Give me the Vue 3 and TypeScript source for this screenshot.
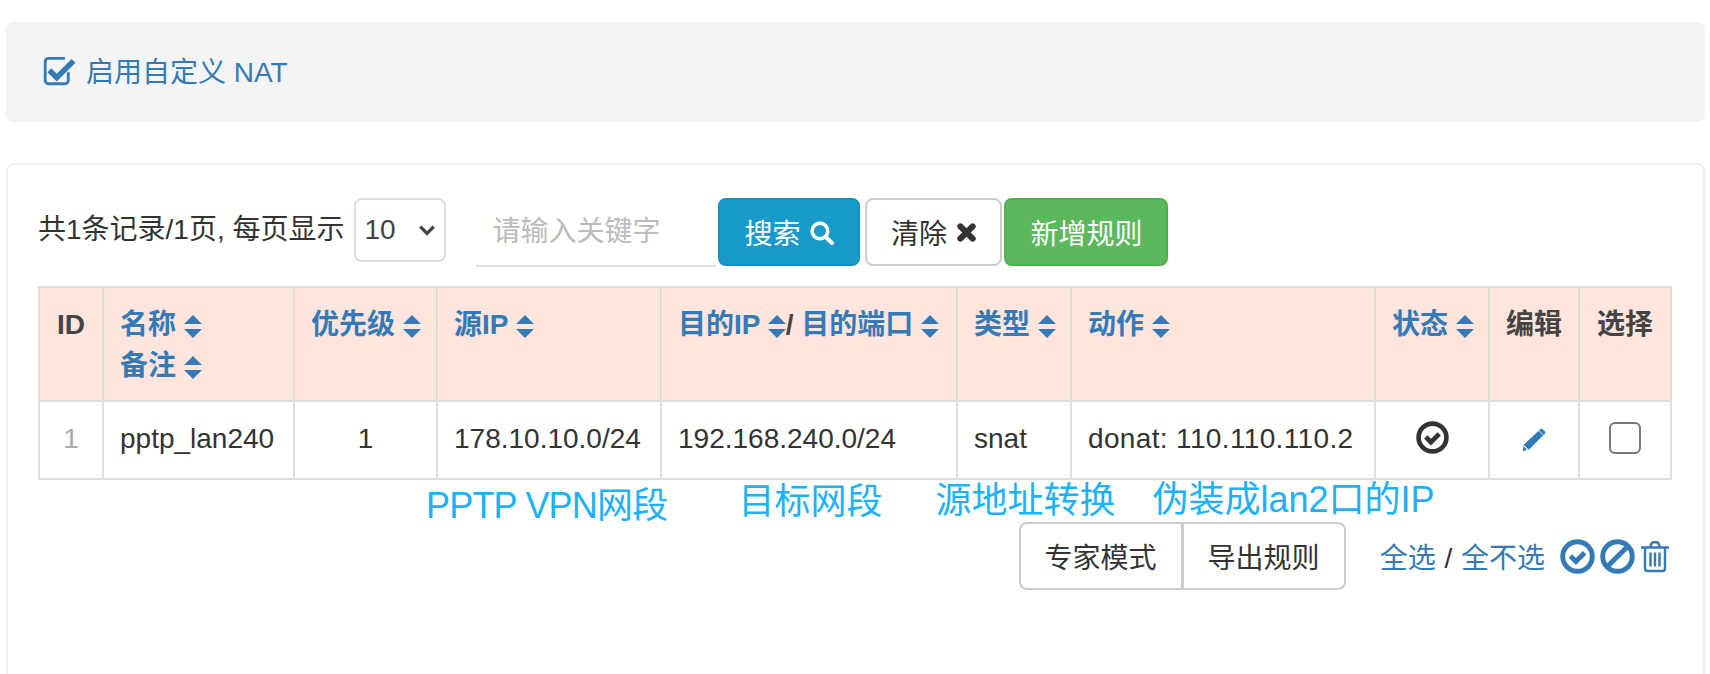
<template>
  <div class="page">
    <!-- NAT switch -->
    <div class="well">
      <label class="nat-check">
        <svg class="check-square" viewBox="0 0 30 30">
          <path d="M23 16.5V24a3 3 0 0 1-3 3H5a3 3 0 0 1-3-3V7a3 3 0 0 1 3-3h15" fill="none" stroke="#337ab7" stroke-width="2.600" />
          <path d="M7.5 13l5 5L26 4.500l3.500 3.500L12.500 25 4 16.500z" fill="#337ab7" />
        </svg>
        <span>启用自定义 NAT</span>
      </label>
    </div>

    <div class="card">
      <!-- Toolbar -->
      <div class="toolbar">
        <span class="summary">共1条记录/1页, 每页显示</span>
        <div class="page-size">
          <span>10</span>
          <svg viewBox="0 0 16 10" class="chevron"><path d="M2 2l6 6 6-6" fill="none" stroke="#444" stroke-width="3" /></svg>
        </div>
        <input class="keyword" type="text" placeholder="请输入关键字" />
        <button class="btn btn-info">
          搜索
          <svg viewBox="0 0 24 24" class="btn-icon"><circle cx="10.500" cy="10.500" r="7.500" fill="none" stroke="#fff" stroke-width="3.400" /><path d="M16 16l6 6" stroke="#fff" stroke-width="4" stroke-linecap="round" /></svg>
        </button>
        <button class="btn btn-default btn-clear">
          清除
          <svg viewBox="0 0 24 24" class="btn-icon close"><path d="M5 5l14 14M19 5L5 19" stroke="#333" stroke-width="7" stroke-linecap="round" /></svg>
        </button>
        <button class="btn btn-success">新增规则</button>
      </div>

      <!-- Rules -->
      <table class="rules">
        <colgroup>
          <col v-for="w in colWidths" :key="w.id" :style="{ width: w.px + 'px' }" />
        </colgroup>
        <thead>
          <tr>
            <th class="plain">ID</th>
            <th>
              <div v-for="label in ['名称', '备注']" :key="label" class="sort-link">
                {{ label }}
                <svg viewBox="1 1 14 18" class="sort"><path d="M8 1l7 7H1zM8 19l-7-7h14z" /></svg>
              </div>
            </th>
            <th><span class="sort-link">优先级 <svg viewBox="1 1 14 18" class="sort"><path d="M8 1l7 7H1zM8 19l-7-7h14z" /></svg></span></th>
            <th><span class="sort-link">源IP <svg viewBox="1 1 14 18" class="sort"><path d="M8 1l7 7H1zM8 19l-7-7h14z" /></svg></span></th>
            <th>
              <span class="sort-link">目的IP <svg viewBox="1 1 14 18" class="sort"><path d="M8 1l7 7H1zM8 19l-7-7h14z" /></svg></span><span class="plain">/</span> <span class="sort-link">目的端口 <svg viewBox="1 1 14 18" class="sort"><path d="M8 1l7 7H1zM8 19l-7-7h14z" /></svg></span>
            </th>
            <th><span class="sort-link">类型 <svg viewBox="1 1 14 18" class="sort"><path d="M8 1l7 7H1zM8 19l-7-7h14z" /></svg></span></th>
            <th><span class="sort-link">动作 <svg viewBox="1 1 14 18" class="sort"><path d="M8 1l7 7H1zM8 19l-7-7h14z" /></svg></span></th>
            <th><span class="sort-link">状态 <svg viewBox="1 1 14 18" class="sort"><path d="M8 1l7 7H1zM8 19l-7-7h14z" /></svg></span></th>
            <th class="plain">编辑</th>
            <th class="plain">选择</th>
          </tr>
        </thead>
        <tbody>
          <tr>
            <td class="row-id">1</td>
            <td>pptp_lan240</td>
            <td class="center">1</td>
            <td>178.10.10.0/24</td>
            <td>192.168.240.0/24</td>
            <td>snat</td>
            <td class="action">donat: 110.110.110.2</td>
            <td class="center">
              <svg viewBox="0 0 32 32" class="cell-icon">
                <circle cx="16" cy="16" r="13.500" fill="none" stroke="#333" stroke-width="4.500" />
                <path d="M9.500 15.500l5 5 8-8" fill="none" stroke="#333" stroke-width="4.500" />
              </svg>
            </td>
            <td class="center">
              <svg viewBox="0 0 28 28" class="cell-icon pencil">
                <path d="M19 4l5 5L9 24l-7 2 1-7z" fill="#337ab7" />
                <path d="M20.500 2.500a2 2 0 0 1 2.800 0l2.200 2.200a2 2 0 0 1 0 2.800l-1 1-5-5z" fill="#337ab7" />
                <path d="M3.500 20.500l4 4" stroke="#fffffd" stroke-width="1.200" />
              </svg>
            </td>
            <td class="center"><span class="row-check"></span></td>
          </tr>
        </tbody>
      </table>

      <!-- Hand-written notes on the screenshot -->
      <div class="notes">
        <span class="note-vpn">PPTP VPN网段</span>
        <span class="note-target">目标网段</span>
        <span class="note-source">源地址转换</span>
        <span class="note-mask">伪装成lan2口的IP</span>
      </div>

      <!-- Footer actions -->
      <div class="actions">
        <div class="btn-group">
          <button class="btn btn-default">专家模式</button>
          <button class="btn btn-default">导出规则</button>
        </div>
        <div class="select-links">
          <a>全选</a> / <a>全不选</a>
        </div>
        <div class="bulk-icons">
          <svg viewBox="0 0 32 32">
            <circle cx="16" cy="16" r="13.500" fill="none" stroke="#337ab7" stroke-width="4.500" />
            <path d="M9.500 15.500l5 5 8-8" fill="none" stroke="#337ab7" stroke-width="4.500" />
          </svg>
          <svg viewBox="0 0 32 32">
            <circle cx="16" cy="16" r="13.500" fill="none" stroke="#337ab7" stroke-width="4.500" />
            <path d="M7 25L25 7" stroke="#337ab7" stroke-width="4.500" />
          </svg>
          <svg viewBox="0 0 30 32" class="trash">
            <path d="M1 7h28M5 7v21a2.500 2.500 0 0 0 2.500 2.500h15A2.500 2.500 0 0 0 25 28V7M10 7l1.500-4a2 2 0 0 1 2-1.300h3a2 2 0 0 1 2 1.300L20 7" fill="none" stroke="#337ab7" stroke-width="2.400" />
            <path d="M10.500 12v14M15 12v14M19.500 12v14" stroke="#337ab7" stroke-width="2.400" />
          </svg>
        </div>
      </div>
    </div>
  </div>
</template>

<script setup lang="ts">
interface ColWidth {
  id: string
  px: number
}

const colWidths: ColWidth[] = [
  { id: 'id', px: 64 },
  { id: 'name', px: 191 },
  { id: 'priority', px: 143 },
  { id: 'src', px: 224 },
  { id: 'dst', px: 296 },
  { id: 'type', px: 114 },
  { id: 'action', px: 304 },
  { id: 'status', px: 114 },
  { id: 'edit', px: 90 },
  { id: 'select', px: 92 }
]
</script>

<style>
html,
body {
  margin: 0;
  background: #fffffd;
  overflow: hidden;
}
</style>

<style scoped>
.page {
  height: 674px;
  overflow: hidden;
  box-sizing: border-box;
  padding: 22px 5px 0 6px;
  font-family: "Liberation Sans", "Noto Sans CJK SC", sans-serif;
  font-size: 28px;
  color: #333;
}

.well {
  height: 100px;
  display: flex;
  align-items: center;
  box-sizing: border-box;
  padding: 0 0 4px 37px;
  background: #f4f4f6;
  border-radius: 8px;
}

.nat-check {
  display: flex;
  align-items: center;
  gap: 10px;
  color: #337ab7;
}

.check-square {
  width: 33px;
  height: 33px;
}

.card {
  margin-top: 41px;
  height: 560px;
  box-sizing: border-box;
  padding: 33px 32px 0 30px;
  border: 2px solid #efefef;
  border-radius: 8px;
  background: #fffffd;
}

.toolbar {
  display: flex;
  align-items: flex-start;
  height: 88px;
}

.summary {
  line-height: 64px;
  margin-right: 10px;
}

.page-size {
  width: 92px;
  height: 64px;
  box-sizing: border-box;
  padding: 0 8px;
  display: flex;
  align-items: center;
  justify-content: space-between;
  border: 2px solid #ddd;
  border-radius: 8px;
  color: #444;
}

.chevron {
  width: 18px;
  height: 12px;
}

.keyword {
  width: 240px;
  height: 69px;
  margin-left: 30px;
  box-sizing: border-box;
  padding: 0 16px;
  border: 0;
  border-bottom: 2px solid #ddd;
  background: transparent;
  font: inherit;
  outline: none;
}

.keyword::placeholder {
  color: #bbb;
}

.btn {
  height: 68px;
  padding: 0 12px;
  box-sizing: border-box;
  display: inline-flex;
  align-items: center;
  justify-content: center;
  gap: 9px;
  font: inherit;
  border: 2px solid transparent;
  border-radius: 8px;
  white-space: nowrap;
}

.btn-info {
  width: 142px;
  margin-left: 2px;
  color: #fff;
  background: #189acb;
  border-color: #1790bd;
}

.btn-default {
  color: #333;
  background: #fffffd;
  border-color: #ccc;
}

.btn-clear {
  width: 137px;
  margin-left: 5px;
}

.btn-success {
  width: 164px;
  margin-left: 2px;
  color: #fff;
  background: #5cb85c;
  border-color: #4cae4c;
}

.btn-icon {
  width: 25px;
  height: 25px;
}

.btn-icon.close {
  width: 21px;
  height: 21px;
}

.rules {
  width: 1632px;
  table-layout: fixed;
  border-collapse: collapse;
  border: 2px solid #ddd;
}

.rules th,
.rules td {
  border: 2px solid #ddd;
  box-sizing: border-box;
  padding: 16px;
  text-align: left;
}

.rules th {
  height: 112px;
  padding: 16px 16px 14px;
  vertical-align: top;
  font-weight: bold;
  line-height: 41px;
  background: #fee5dd;
  color: #444;
  white-space: nowrap;
}

.rules th.plain {
  text-align: center;
  padding: 16px 8px 14px;
}

.rules td {
  height: 78px;
  padding: 0 16px 2px;
  vertical-align: middle;
  white-space: nowrap;
}

.rules td.center {
  text-align: center;
}

.rules td.row-id {
  text-align: center;
  color: #aaa;
  padding: 0 0 2px;
}

.rules td.action {
  letter-spacing: 0.35px;
}

.sort-link {
  color: #337ab7;
}

.plain {
  color: #444;
}

.sort {
  width: 18px;
  height: 23px;
  fill: #337ab7;
  vertical-align: -4px;
}

.cell-icon {
  width: 33px;
  height: 33px;
  margin-bottom: 3px;
  vertical-align: middle;
}

.pencil {
  width: 26px;
  height: 26px;
  margin-bottom: 2px;
}

.row-check {
  display: inline-block;
  width: 32px;
  height: 32px;
  margin-bottom: 2px;
  box-sizing: border-box;
  border: 2px solid #777;
  border-radius: 6px;
  vertical-align: middle;
}

.notes {
  display: flex;
  height: 42px;
  padding-left: 388px;
  font-size: 36px;
  line-height: 46px;
  color: #1cb1fb;
  white-space: nowrap;
}

.note-vpn {
  margin-top: 3px;
  letter-spacing: -0.8px;
}

.note-target {
  margin: -1px 0 0 71px;
}

.note-source {
  margin: -2px 0 0 53px;
}

.note-mask {
  margin: -3px 0 0 37px;
}

.actions {
  display: flex;
  align-items: center;
  justify-content: flex-end;
  height: 68px;
}

.btn-group {
  display: flex;
  margin-right: 34px;
}

.btn-group .btn {
  width: 164px;
  border-radius: 8px 0 0 8px;
}

.btn-group .btn + .btn {
  margin-left: -1px;
  border-radius: 0 8px 8px 0;
}

.select-links {
  white-space: nowrap;
  word-spacing: 1px;
}

.select-links a {
  color: #337ab7;
}

.bulk-icons {
  display: flex;
  align-items: center;
  gap: 5px;
  margin-left: 15px;
  padding-right: 1px;
}

.bulk-icons svg {
  width: 35px;
  height: 35px;
}

.bulk-icons .trash {
  width: 30px;
}
</style>
